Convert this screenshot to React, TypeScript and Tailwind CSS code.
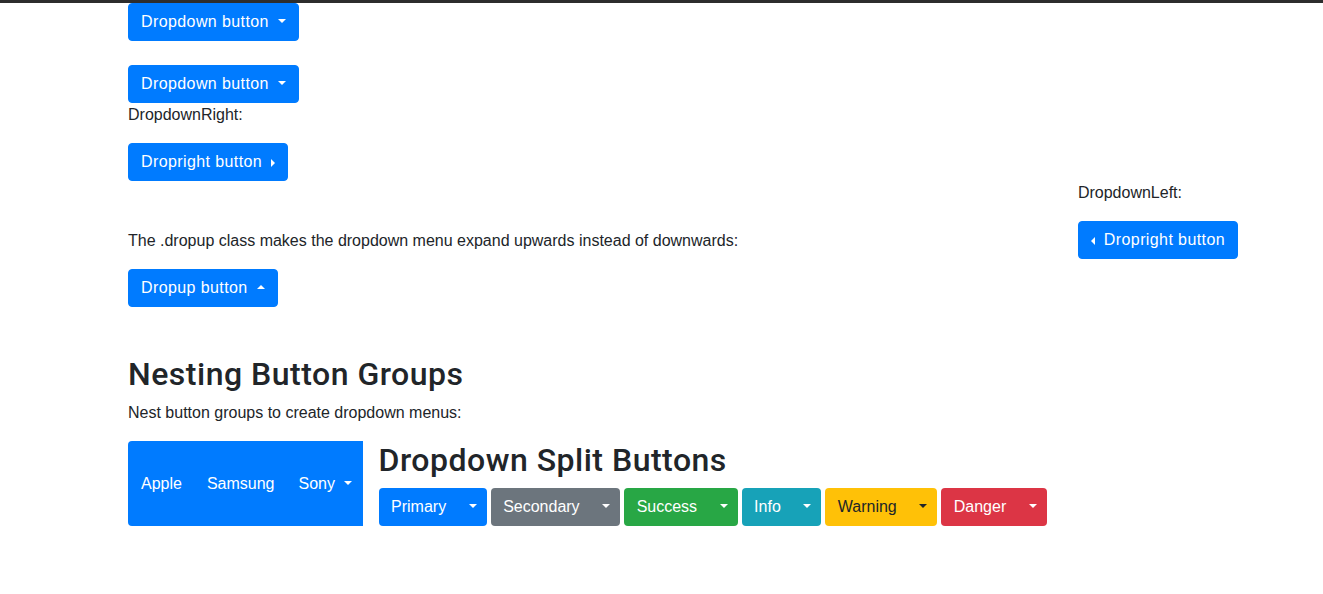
import React from "react";

type Dir = "down" | "up" | "right" | "left";

function Caret({ dir = "down", split = false }: { dir?: Dir; split?: boolean }) {
  if (dir === "up") {
    return <span className="inline-block w-0 h-0 ml-[0.255em] align-[0.255em] border-b-[4.8px] border-b-current border-x-[4.8px] border-x-transparent" />;
  }
  if (dir === "right") {
    return <span className="inline-block w-0 h-0 ml-[0.255em] align-[0px] border-l-[4.8px] border-l-current border-y-[4.8px] border-y-transparent" />;
  }
  if (dir === "left") {
    return <span className="inline-block w-0 h-0 mr-[0.255em] align-[0px] border-r-[4.8px] border-r-current border-y-[4.8px] border-y-transparent" />;
  }
  return (
    <span
      className={`inline-block w-0 h-0 align-[0.255em] border-t-[4.8px] border-t-current border-x-[4.8px] border-x-transparent ${split ? "" : "ml-[0.255em]"}`}
    />
  );
}

function BlueButton({ children }: { children: React.ReactNode }) {
  return (
    <button className="block w-fit h-[38px] px-3 border border-[#007bff] bg-[#007bff] text-white rounded text-base leading-6 tracking-[0.4px] whitespace-nowrap">
      {children}
    </button>
  );
}

const splits = [
  { label: "Primary", cls: "bg-[#007bff] text-white" },
  { label: "Secondary", cls: "bg-[#6c757d] text-white" },
  { label: "Success", cls: "bg-[#28a745] text-white" },
  { label: "Info", cls: "bg-[#17a2b8] text-white" },
  { label: "Warning", cls: "bg-[#ffc107] text-[#212529]" },
  { label: "Danger", cls: "bg-[#dc3545] text-white" },
];

const heading = "text-[32px] leading-[1.2] font-medium tracking-[0.5px] font-['Roboto',sans-serif]";

export default function App() {
  return (
    <div className="min-h-[594px] bg-white text-[#212529] text-base leading-6 font-['Liberation_Sans',Arial,sans-serif]">
      <div className="h-[3px] bg-[#2d2d2d]" />
      <div className="ml-[128px] w-[1110px]">
        <BlueButton>
          Dropdown button <Caret />
        </BlueButton>
        <div className="mt-6">
          <BlueButton>
            Dropdown button <Caret />
          </BlueButton>
        </div>
        <p className="mb-4">DropdownRight:</p>
        <BlueButton>
          Dropright button <Caret dir="right" />
        </BlueButton>

        <div className="flex justify-between">
          <div className="pt-12">
            <p className="mb-4">The .dropup class makes the dropdown menu expand upwards instead of downwards:</p>
            <BlueButton>
              Dropup button <Caret dir="up" />
            </BlueButton>
          </div>
          <div>
            <p className="mb-4">DropdownLeft:</p>
            <BlueButton>
              <Caret dir="left" /> Dropright button
            </BlueButton>
          </div>
        </div>

        <h2 className={`mt-12 mb-2 ${heading}`}>Nesting Button Groups</h2>
        <p className="mb-4">Nest button groups to create dropdown menus:</p>

        <div className="flex items-stretch gap-4">
          <div className="flex items-center bg-[#007bff] text-white rounded-l">
            <span className="px-3 border border-transparent">Apple</span>
            <span className="px-[11px] border border-transparent">Samsung</span>
            <span className="pl-[11px] pr-[10px] border border-transparent">
              Sony <Caret />
            </span>
          </div>
          <div>
            <h2 className={`mb-2 ${heading}`}>Dropdown Split Buttons</h2>
            <div className="flex gap-1">
              {splits.map((s) => (
                <div key={s.label} className={`flex h-[38px] rounded overflow-hidden ${s.cls}`}>
                  <button className="px-[12.5px] leading-6">{s.label}</button>
                  <button className="px-[10px] leading-6">
                    <Caret split />
                  </button>
                </div>
              ))}
            </div>
          </div>
        </div>
      </div>
    </div>
  );
}
